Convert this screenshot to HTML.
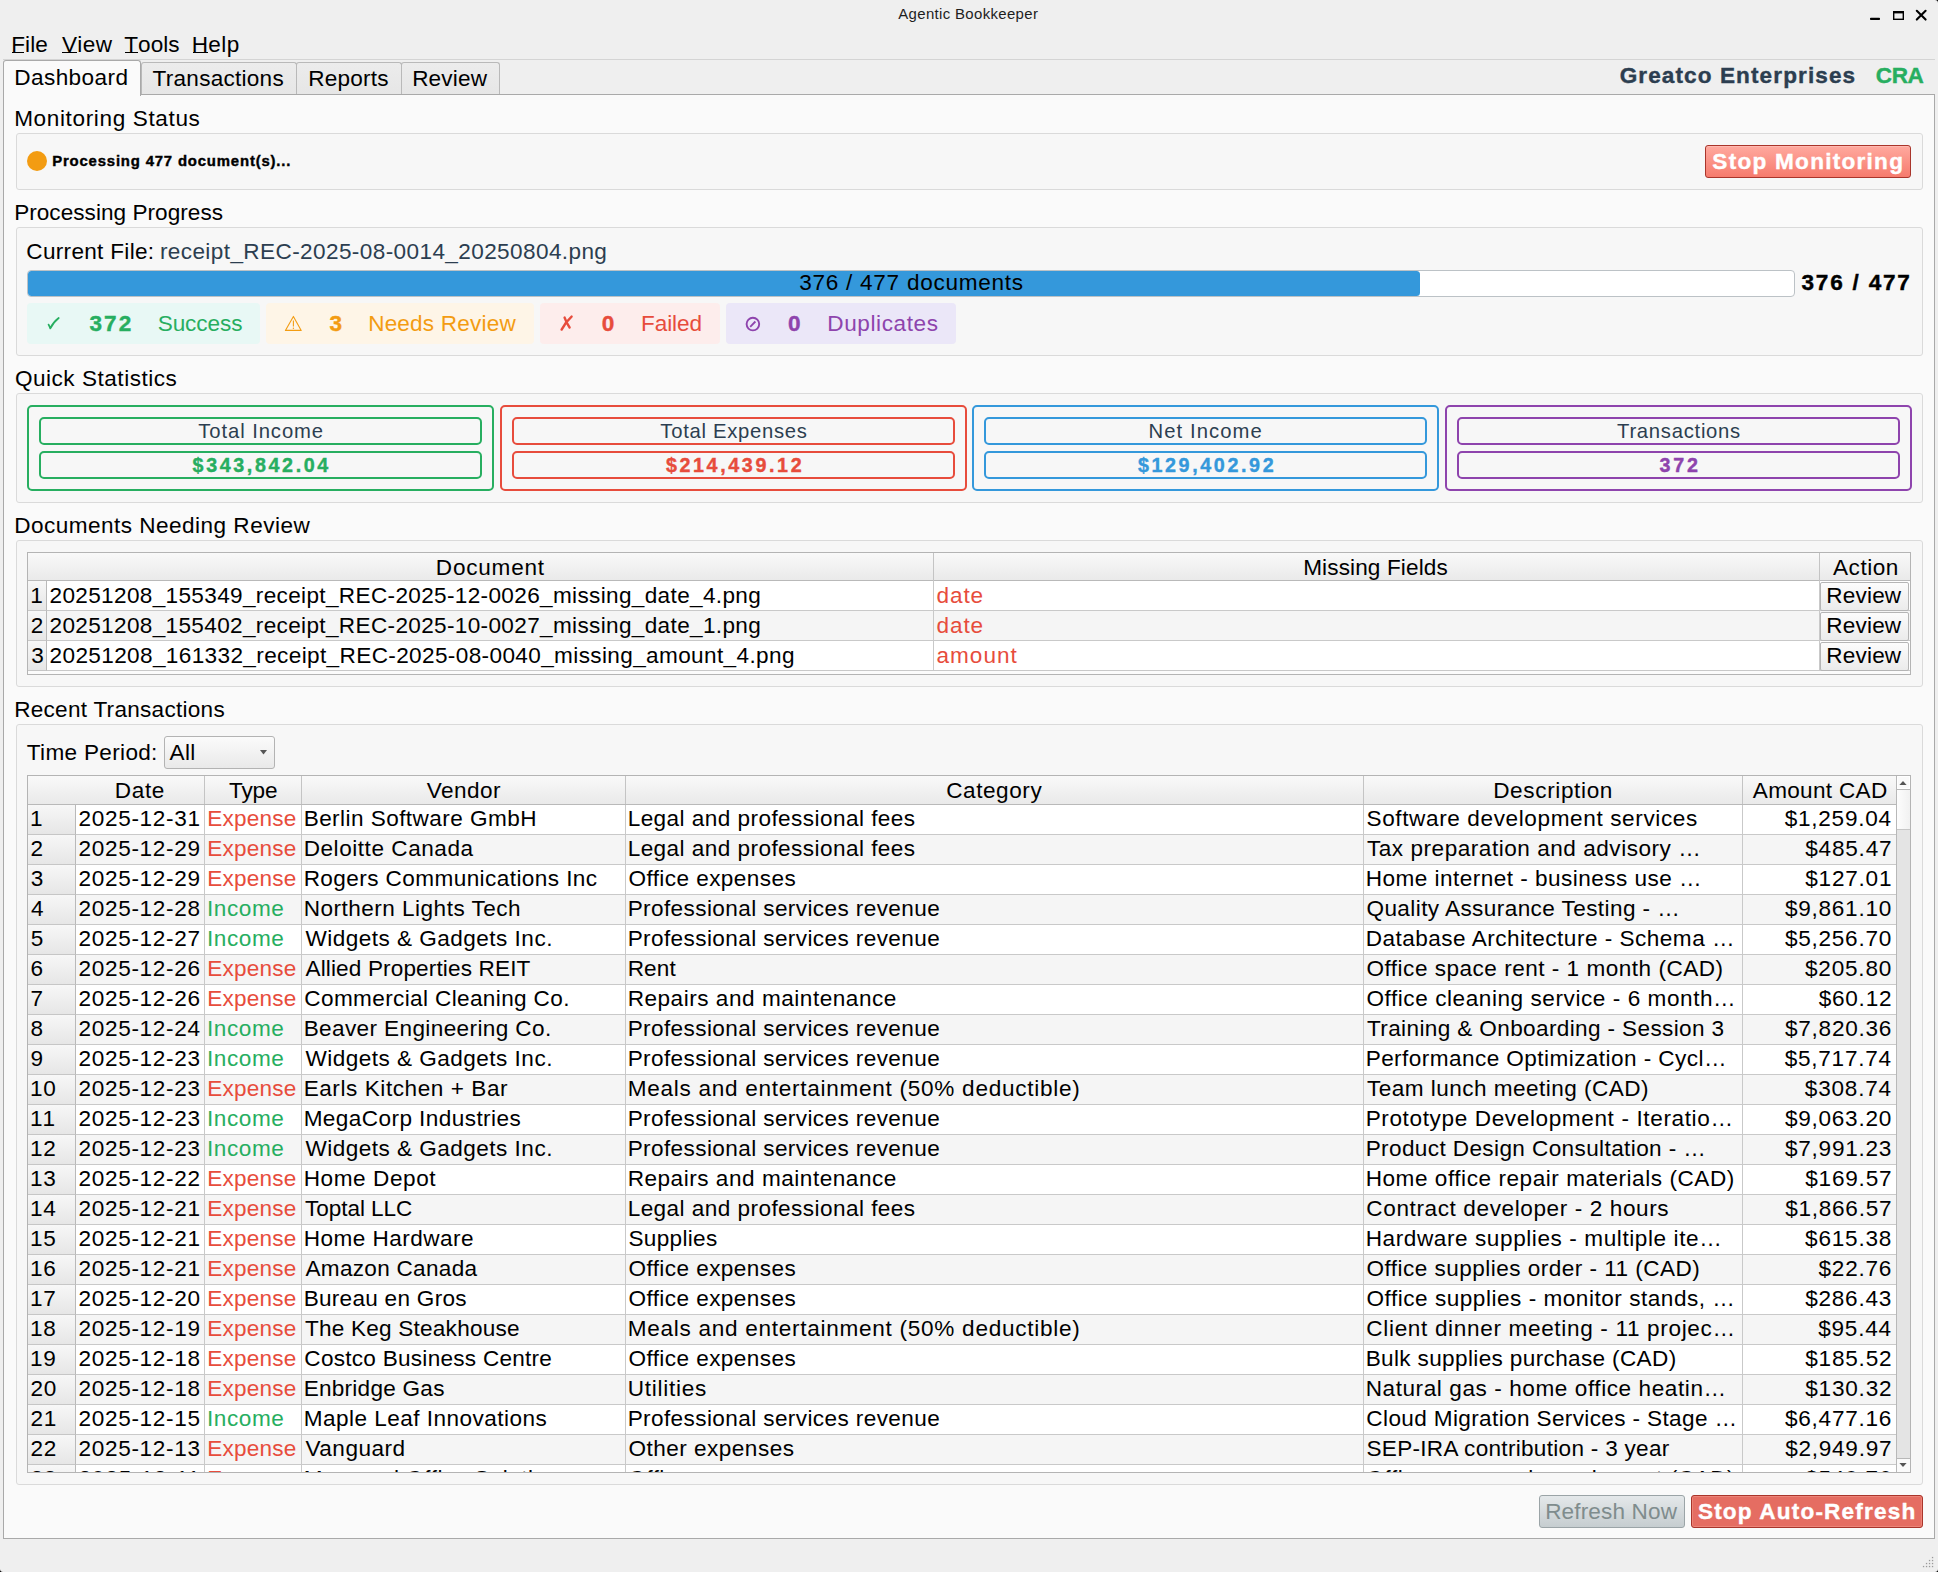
<!DOCTYPE html>
<html><head><meta charset="utf-8"><title>Agentic Bookkeeper</title>
<style>
*{margin:0;padding:0;box-sizing:border-box}
html,body{width:1938px;height:1572px;overflow:hidden}
body{background:#efefef;position:relative;font-family:"Liberation Sans",sans-serif;font-kerning:normal}
.b{position:absolute}
.t{position:absolute;white-space:pre;line-height:1}
</style></head><body>
<div class="t" style="left:898.32px;top:7px;font-size:14.95px;letter-spacing:0.345px;color:#1e1e1e;">Agentic Bookkeeper</div>
<svg class="b" style="left:1860px;top:0px" width="78" height="30" viewBox="1860 0 78 30"><rect x="1870" y="17.8" width="10" height="2.2" rx="0.8" fill="#000"/><rect x="1893.7" y="11.7" width="9.6" height="7.6" fill="none" stroke="#000" stroke-width="1.4"/><rect x="1893" y="11" width="11" height="2.4" fill="#000"/><path d="M1916.8 10.8L1925.6 19.6M1925.6 10.8L1916.8 19.6" stroke="#000" stroke-width="2.1" stroke-linecap="round"/></svg>
<div class="t" style="left:11.15px;top:34px;font-size:22.57px;letter-spacing:0.099px;color:#000;font-kerning:none;">File</div>
<div class="b" style="left:12px;top:52px;width:12px;height:1.3px;background:#000"></div>
<div class="t" style="left:61.90px;top:34px;font-size:22.57px;letter-spacing:0.377px;color:#000;font-kerning:none;">View</div>
<div class="b" style="left:62px;top:52px;width:15px;height:1.3px;background:#000"></div>
<div class="t" style="left:124.29px;top:34px;font-size:22.57px;letter-spacing:0.049px;color:#000;font-kerning:none;">Tools</div>
<div class="b" style="left:124.9px;top:52px;width:13.099999999999994px;height:1.3px;background:#000"></div>
<div class="t" style="left:191.65px;top:34px;font-size:22.57px;letter-spacing:0.397px;color:#000;font-kerning:none;">Help</div>
<div class="b" style="left:193px;top:52px;width:15px;height:1.3px;background:#000"></div>
<div class="b" style="left:3px;top:59px;width:1932px;height:1px;background:#d4d4d4"></div>
<div class="b" style="left:3px;top:94px;width:1932px;height:1445px;background:#fafafa;border:1px solid #a9a9a9"></div>
<div class="b" style="left:141px;top:62px;width:156px;height:32px;background:linear-gradient(#ececec,#e6e6e6);border:1px solid #b9b9b9;border-bottom:none;border-radius:3px 3px 0 0"></div>
<div class="b" style="left:296px;top:62px;width:106px;height:32px;background:linear-gradient(#ececec,#e6e6e6);border:1px solid #b9b9b9;border-bottom:none;border-radius:3px 3px 0 0"></div>
<div class="b" style="left:401px;top:62px;width:99px;height:32px;background:linear-gradient(#ececec,#e6e6e6);border:1px solid #b9b9b9;border-bottom:none;border-radius:3px 3px 0 0"></div>
<div class="b" style="left:3px;top:60px;width:138px;height:36px;background:#fafafa;border:1px solid #a9a9a9;border-bottom:none;border-radius:3px 3px 0 0"></div>
<div class="t" style="left:14.25px;top:67px;font-size:22.57px;letter-spacing:0.424px;color:#000;">Dashboard</div>
<div class="t" style="left:152.59px;top:68px;font-size:22.57px;letter-spacing:0.254px;color:#000;">Transactions</div>
<div class="t" style="left:308.15px;top:68px;font-size:22.57px;letter-spacing:0.248px;color:#000;">Reports</div>
<div class="t" style="left:412.15px;top:68px;font-size:22.57px;letter-spacing:0.187px;color:#000;">Review</div>
<div class="t" style="left:1619.67px;top:65px;font-size:22.57px;letter-spacing:1.097px;color:#2c3e50;font-weight:bold;-webkit-text-stroke:0.4px #2c3e50;">Greatco Enterprises</div>
<div class="t" style="left:1875.67px;top:65px;font-size:22.57px;letter-spacing:-0.314px;color:#27ae60;font-weight:bold;-webkit-text-stroke:0.4px #27ae60;">CRA</div>
<div class="t" style="left:14.15px;top:108px;font-size:22.57px;letter-spacing:0.633px;color:#000;">Monitoring Status</div>
<div class="b" style="left:16px;top:133px;width:1907px;height:57px;background:#f7f7f7;border:1px solid #dadada;border-radius:3px"></div>
<div class="t" style="left:14.15px;top:202px;font-size:22.57px;letter-spacing:0.040px;color:#000;">Processing Progress</div>
<div class="b" style="left:16px;top:227px;width:1907px;height:129px;background:#f7f7f7;border:1px solid #dadada;border-radius:3px"></div>
<div class="t" style="left:14.93px;top:368px;font-size:22.57px;letter-spacing:0.513px;color:#000;">Quick Statistics</div>
<div class="b" style="left:16px;top:393px;width:1907px;height:110px;background:#f7f7f7;border:1px solid #dadada;border-radius:3px"></div>
<div class="t" style="left:14.15px;top:515px;font-size:22.57px;letter-spacing:0.474px;color:#000;">Documents Needing Review</div>
<div class="b" style="left:16px;top:540px;width:1907px;height:147px;background:#f7f7f7;border:1px solid #dadada;border-radius:3px"></div>
<div class="t" style="left:14.15px;top:699px;font-size:22.57px;letter-spacing:0.270px;color:#000;">Recent Transactions</div>
<div class="b" style="left:16px;top:724px;width:1907px;height:761px;background:#f7f7f7;border:1px solid #dadada;border-radius:3px"></div>
<div class="b" style="left:27px;top:151px;width:20px;height:20px;background:#f39c12;border-radius:50%"></div>
<div class="t" style="left:52.20px;top:154px;font-size:14.9px;letter-spacing:0.823px;color:#000;font-weight:bold;-webkit-text-stroke:0.4px #000;">Processing 477 document(s)...</div>
<div class="b" style="left:1705px;top:145px;width:206px;height:33px;background:linear-gradient(#ffa99f,#f67b6d);border:1px solid #a9352b;border-radius:3px;box-shadow:inset 0 1px 0 #ffb9b0"></div>
<div class="t" style="left:1712.35px;top:151px;font-size:22.57px;letter-spacing:1.262px;color:#fff;font-weight:bold;-webkit-text-stroke:0.4px #fff;">Stop Monitoring</div>
<div class="t" style="left:26.35px;top:241px;font-size:22.57px;letter-spacing:0.302px;color:#000;">Current File:</div>
<div class="t" style="left:159.90px;top:241px;font-size:22.57px;letter-spacing:0.396px;color:#2c3e50;">receipt_REC-2025-08-0014_20250804.png</div>
<div class="b" style="left:27px;top:270px;width:1768px;height:27px;background:#fff;border:1px solid #bcc2c6;border-radius:4px"></div>
<div class="b" style="left:28px;top:271px;width:1392px;height:25px;background:#3498db;border-radius:3.5px"></div>
<div class="t" style="left:799.20px;top:272px;font-size:22.57px;letter-spacing:0.735px;color:#000;">376 / 477 documents</div>
<div class="t" style="left:1801.48px;top:272px;font-size:22.57px;letter-spacing:1.790px;color:#000;font-weight:bold;-webkit-text-stroke:0.4px #000;">376 / 477</div>
<div class="b" style="left:27px;top:303px;width:233px;height:41px;background:#e8f8f5;border-radius:4px"></div>
<div class="b" style="left:266px;top:303px;width:268px;height:41px;background:#fef5e7;border-radius:4px"></div>
<div class="b" style="left:540px;top:303px;width:180px;height:41px;background:#fdedec;border-radius:4px"></div>
<div class="b" style="left:726px;top:303px;width:230px;height:41px;background:#ebe7f8;border-radius:4px"></div>
<div class="t" style="left:89.38px;top:313px;font-size:22.57px;letter-spacing:2.094px;color:#27ae60;font-weight:bold;-webkit-text-stroke:0.4px #27ae60;">372</div>
<div class="t" style="left:157.68px;top:313px;font-size:22.57px;letter-spacing:-0.078px;color:#27ae60;">Success</div>
<div class="t" style="left:329.48px;top:313px;font-size:22.57px;letter-spacing:2.084px;color:#f39c12;font-weight:bold;-webkit-text-stroke:0.4px #f39c12;">3</div>
<div class="t" style="left:368.15px;top:313px;font-size:22.57px;letter-spacing:0.193px;color:#f39c12;">Needs Review</div>
<div class="t" style="left:601.71px;top:313px;font-size:22.57px;letter-spacing:2.084px;color:#e74c3c;font-weight:bold;-webkit-text-stroke:0.4px #e74c3c;">0</div>
<div class="t" style="left:640.95px;top:313px;font-size:22.57px;letter-spacing:-0.061px;color:#e74c3c;">Failed</div>
<div class="t" style="left:787.91px;top:313px;font-size:22.57px;letter-spacing:2.084px;color:#8e44ad;font-weight:bold;-webkit-text-stroke:0.4px #8e44ad;">0</div>
<div class="t" style="left:827.35px;top:313px;font-size:22.57px;letter-spacing:0.591px;color:#8e44ad;">Duplicates</div>
<svg class="b" style="left:0;top:300px" width="980" height="50" viewBox="0 300 980 50"><path d="M48.6 324.6Q49.6 326.5 50.3 328.3Q53 322.5 58.7 318" fill="none" stroke="#27ae60" stroke-width="1.8" stroke-linecap="round" stroke-linejoin="round"/><path d="M293.4 316.4L285.4 330.4L301.2 330.4Z" fill="none" stroke="#f39c12" stroke-width="1.1" stroke-linejoin="round"/><path d="M293.4 320.5L293.4 326.6" stroke="#f39c12" stroke-width="1.1"/><circle cx="293.4" cy="328.3" r="0.7" fill="#f39c12"/><path d="M564.6 317.6Q566.5 323 569.6 327.5M571.6 316.6Q565.5 322 561.6 329.6" fill="none" stroke="#e74c3c" stroke-width="2.4" stroke-linecap="round"/><circle cx="752.9" cy="324.1" r="6.3" fill="none" stroke="#8e44ad" stroke-width="1.9"/><path d="M750.2 326.8L755.4 321.5" stroke="#8e44ad" stroke-width="1.8"/></svg>
<div class="b" style="left:27px;top:405px;width:467px;height:86px;border:2px solid #27ae60;border-radius:5px"></div>
<div class="b" style="left:39px;top:417px;width:443px;height:28px;border:2px solid #27ae60;border-radius:5px"></div>
<div class="b" style="left:39px;top:451px;width:443px;height:28px;border:2px solid #27ae60;border-radius:5px"></div>
<div class="t" style="left:198.32px;top:421px;font-size:20.25px;letter-spacing:0.908px;color:#2c3e50;">Total Income</div>
<div class="t" style="left:192.57px;top:456px;font-size:19.7px;letter-spacing:2.622px;color:#27ae60;font-weight:bold;-webkit-text-stroke:0.4px #27ae60;">$343,842.04</div>
<div class="b" style="left:500px;top:405px;width:467px;height:86px;border:2px solid #e74c3c;border-radius:5px"></div>
<div class="b" style="left:512px;top:417px;width:443px;height:28px;border:2px solid #e74c3c;border-radius:5px"></div>
<div class="b" style="left:512px;top:451px;width:443px;height:28px;border:2px solid #e74c3c;border-radius:5px"></div>
<div class="t" style="left:660.37px;top:421px;font-size:20.25px;letter-spacing:0.708px;color:#2c3e50;">Total Expenses</div>
<div class="t" style="left:665.91px;top:456px;font-size:19.7px;letter-spacing:2.622px;color:#e74c3c;font-weight:bold;-webkit-text-stroke:0.4px #e74c3c;">$214,439.12</div>
<div class="b" style="left:972px;top:405px;width:467px;height:86px;border:2px solid #3498db;border-radius:5px"></div>
<div class="b" style="left:984px;top:417px;width:443px;height:28px;border:2px solid #3498db;border-radius:5px"></div>
<div class="b" style="left:984px;top:451px;width:443px;height:28px;border:2px solid #3498db;border-radius:5px"></div>
<div class="t" style="left:1148.55px;top:421px;font-size:20.25px;letter-spacing:1.065px;color:#2c3e50;">Net Income</div>
<div class="t" style="left:1137.91px;top:456px;font-size:19.7px;letter-spacing:2.622px;color:#3498db;font-weight:bold;-webkit-text-stroke:0.4px #3498db;">$129,402.92</div>
<div class="b" style="left:1445px;top:405px;width:467px;height:86px;border:2px solid #8e44ad;border-radius:5px"></div>
<div class="b" style="left:1457px;top:417px;width:443px;height:28px;border:2px solid #8e44ad;border-radius:5px"></div>
<div class="b" style="left:1457px;top:451px;width:443px;height:28px;border:2px solid #8e44ad;border-radius:5px"></div>
<div class="t" style="left:1617.06px;top:421px;font-size:20.25px;letter-spacing:0.727px;color:#2c3e50;">Transactions</div>
<div class="t" style="left:1659.48px;top:456px;font-size:19.7px;letter-spacing:2.754px;color:#8e44ad;font-weight:bold;-webkit-text-stroke:0.4px #8e44ad;">372</div>
<div class="b" style="left:27px;top:552px;width:1884px;height:123px;background:#fbfbfb;border:1px solid #b4b4b4"></div>
<div class="b" style="left:28px;top:553px;width:1882px;height:28px;background:linear-gradient(#f9f9f9,#e9e9e9)"></div>
<div class="b" style="left:28px;top:580px;width:1882px;height:1px;background:#b9b9b9"></div>
<div class="b" style="left:933px;top:553px;width:1px;height:28px;background:#c4c4c4"></div>
<div class="b" style="left:1819px;top:553px;width:1px;height:28px;background:#c4c4c4"></div>
<div class="t" style="left:435.82px;top:557px;font-size:22.57px;letter-spacing:0.776px;color:#000;">Document</div>
<div class="t" style="left:1303.18px;top:557px;font-size:22.57px;letter-spacing:0.128px;color:#000;">Missing Fields</div>
<div class="t" style="left:1833.02px;top:557px;font-size:22.57px;letter-spacing:0.535px;color:#000;">Action</div>
<div class="b" style="left:47px;top:581px;width:1863px;height:30px;background:#ffffff"></div>
<div class="b" style="left:28px;top:581px;width:19px;height:30px;background:linear-gradient(#f7f7f7,#e6e6e6);border-right:1px solid #b9b9b9;border-bottom:1px solid #c6c6c6"></div>
<div class="b" style="left:47px;top:610px;width:1863px;height:1px;background:#c9c9c9"></div>
<div class="b" style="left:933px;top:581px;width:1px;height:30px;background:#c9c9c9"></div>
<div class="b" style="left:1819px;top:581px;width:1px;height:30px;background:#c9c9c9"></div>
<div class="t" style="left:30.28px;top:585px;font-size:22.57px;letter-spacing:0.831px;color:#000;">1</div>
<div class="t" style="left:49.56px;top:585px;font-size:22.57px;letter-spacing:0.345px;color:#000;">20251208_155349_receipt_REC-2025-12-0026_missing_date_4.png</div>
<div class="t" style="left:936.55px;top:585px;font-size:22.57px;letter-spacing:0.886px;color:#e74c3c;">date</div>
<div class="b" style="left:1820px;top:582px;width:89px;height:29px;background:linear-gradient(#fcfcfc,#ebebeb);border:1px solid #b5b5b5;border-radius:2px"></div>
<div class="t" style="left:1826.25px;top:585px;font-size:22.57px;letter-spacing:0.187px;color:#000;">Review</div>
<div class="b" style="left:47px;top:611px;width:1863px;height:30px;background:#f5f5f5"></div>
<div class="b" style="left:28px;top:611px;width:19px;height:30px;background:linear-gradient(#f7f7f7,#e6e6e6);border-right:1px solid #b9b9b9;border-bottom:1px solid #c6c6c6"></div>
<div class="b" style="left:47px;top:640px;width:1863px;height:1px;background:#c9c9c9"></div>
<div class="b" style="left:933px;top:611px;width:1px;height:30px;background:#c9c9c9"></div>
<div class="b" style="left:1819px;top:611px;width:1px;height:30px;background:#c9c9c9"></div>
<div class="t" style="left:30.86px;top:615px;font-size:22.57px;letter-spacing:0.831px;color:#000;">2</div>
<div class="t" style="left:49.56px;top:615px;font-size:22.57px;letter-spacing:0.345px;color:#000;">20251208_155402_receipt_REC-2025-10-0027_missing_date_1.png</div>
<div class="t" style="left:936.55px;top:615px;font-size:22.57px;letter-spacing:0.886px;color:#e74c3c;">date</div>
<div class="b" style="left:1820px;top:612px;width:89px;height:29px;background:linear-gradient(#fcfcfc,#ebebeb);border:1px solid #b5b5b5;border-radius:2px"></div>
<div class="t" style="left:1826.25px;top:615px;font-size:22.57px;letter-spacing:0.187px;color:#000;">Review</div>
<div class="b" style="left:47px;top:641px;width:1863px;height:30px;background:#ffffff"></div>
<div class="b" style="left:28px;top:641px;width:19px;height:30px;background:linear-gradient(#f7f7f7,#e6e6e6);border-right:1px solid #b9b9b9;border-bottom:1px solid #c6c6c6"></div>
<div class="b" style="left:47px;top:670px;width:1863px;height:1px;background:#c9c9c9"></div>
<div class="b" style="left:933px;top:641px;width:1px;height:30px;background:#c9c9c9"></div>
<div class="b" style="left:1819px;top:641px;width:1px;height:30px;background:#c9c9c9"></div>
<div class="t" style="left:31.14px;top:645px;font-size:22.57px;letter-spacing:0.831px;color:#000;">3</div>
<div class="t" style="left:49.56px;top:645px;font-size:22.57px;letter-spacing:0.373px;color:#000;">20251208_161332_receipt_REC-2025-08-0040_missing_amount_4.png</div>
<div class="t" style="left:936.54px;top:645px;font-size:22.57px;letter-spacing:0.992px;color:#e74c3c;">amount</div>
<div class="b" style="left:1820px;top:642px;width:89px;height:29px;background:linear-gradient(#fcfcfc,#ebebeb);border:1px solid #b5b5b5;border-radius:2px"></div>
<div class="t" style="left:1826.25px;top:645px;font-size:22.57px;letter-spacing:0.187px;color:#000;">Review</div>
<div class="t" style="left:26.79px;top:742px;font-size:22.57px;letter-spacing:0.323px;color:#000;">Time Period:</div>
<div class="b" style="left:164px;top:736px;width:111px;height:33px;background:linear-gradient(#fbfbfb,#e9e9e9);border:1px solid #b3b3b3;border-radius:3px"></div>
<div class="t" style="left:169.56px;top:742px;font-size:22.57px;letter-spacing:0.339px;color:#000;">All</div>
<svg class="b" style="left:255px;top:745px" width="16" height="14" viewBox="255 745 16 14"><path d="M260 750L267 750L263.5 754.6Z" fill="#555"/></svg>
<div class="b" style="left:27px;top:775px;width:1884px;height:698px;background:#fff;border:1px solid #b4b4b4"></div>
<div class="b" style="left:28px;top:805px;width:1868px;height:667px;overflow:hidden">
<div class="b" style="left:48px;top:0px;width:1820px;height:30px;background:#ffffff"></div>
<div class="b" style="left:0px;top:0px;width:48px;height:30px;background:linear-gradient(#f7f7f7,#e6e6e6);border-right:1px solid #b9b9b9;border-bottom:1px solid #c6c6c6"></div>
<div class="b" style="left:48px;top:29px;width:1820px;height:1px;background:#c9c9c9"></div>
<div class="b" style="left:48px;top:30px;width:1820px;height:30px;background:#f5f5f5"></div>
<div class="b" style="left:0px;top:30px;width:48px;height:30px;background:linear-gradient(#f7f7f7,#e6e6e6);border-right:1px solid #b9b9b9;border-bottom:1px solid #c6c6c6"></div>
<div class="b" style="left:48px;top:59px;width:1820px;height:1px;background:#c9c9c9"></div>
<div class="b" style="left:48px;top:60px;width:1820px;height:30px;background:#ffffff"></div>
<div class="b" style="left:0px;top:60px;width:48px;height:30px;background:linear-gradient(#f7f7f7,#e6e6e6);border-right:1px solid #b9b9b9;border-bottom:1px solid #c6c6c6"></div>
<div class="b" style="left:48px;top:89px;width:1820px;height:1px;background:#c9c9c9"></div>
<div class="b" style="left:48px;top:90px;width:1820px;height:30px;background:#f5f5f5"></div>
<div class="b" style="left:0px;top:90px;width:48px;height:30px;background:linear-gradient(#f7f7f7,#e6e6e6);border-right:1px solid #b9b9b9;border-bottom:1px solid #c6c6c6"></div>
<div class="b" style="left:48px;top:119px;width:1820px;height:1px;background:#c9c9c9"></div>
<div class="b" style="left:48px;top:120px;width:1820px;height:30px;background:#ffffff"></div>
<div class="b" style="left:0px;top:120px;width:48px;height:30px;background:linear-gradient(#f7f7f7,#e6e6e6);border-right:1px solid #b9b9b9;border-bottom:1px solid #c6c6c6"></div>
<div class="b" style="left:48px;top:149px;width:1820px;height:1px;background:#c9c9c9"></div>
<div class="b" style="left:48px;top:150px;width:1820px;height:30px;background:#f5f5f5"></div>
<div class="b" style="left:0px;top:150px;width:48px;height:30px;background:linear-gradient(#f7f7f7,#e6e6e6);border-right:1px solid #b9b9b9;border-bottom:1px solid #c6c6c6"></div>
<div class="b" style="left:48px;top:179px;width:1820px;height:1px;background:#c9c9c9"></div>
<div class="b" style="left:48px;top:180px;width:1820px;height:30px;background:#ffffff"></div>
<div class="b" style="left:0px;top:180px;width:48px;height:30px;background:linear-gradient(#f7f7f7,#e6e6e6);border-right:1px solid #b9b9b9;border-bottom:1px solid #c6c6c6"></div>
<div class="b" style="left:48px;top:209px;width:1820px;height:1px;background:#c9c9c9"></div>
<div class="b" style="left:48px;top:210px;width:1820px;height:30px;background:#f5f5f5"></div>
<div class="b" style="left:0px;top:210px;width:48px;height:30px;background:linear-gradient(#f7f7f7,#e6e6e6);border-right:1px solid #b9b9b9;border-bottom:1px solid #c6c6c6"></div>
<div class="b" style="left:48px;top:239px;width:1820px;height:1px;background:#c9c9c9"></div>
<div class="b" style="left:48px;top:240px;width:1820px;height:30px;background:#ffffff"></div>
<div class="b" style="left:0px;top:240px;width:48px;height:30px;background:linear-gradient(#f7f7f7,#e6e6e6);border-right:1px solid #b9b9b9;border-bottom:1px solid #c6c6c6"></div>
<div class="b" style="left:48px;top:269px;width:1820px;height:1px;background:#c9c9c9"></div>
<div class="b" style="left:48px;top:270px;width:1820px;height:30px;background:#f5f5f5"></div>
<div class="b" style="left:0px;top:270px;width:48px;height:30px;background:linear-gradient(#f7f7f7,#e6e6e6);border-right:1px solid #b9b9b9;border-bottom:1px solid #c6c6c6"></div>
<div class="b" style="left:48px;top:299px;width:1820px;height:1px;background:#c9c9c9"></div>
<div class="b" style="left:48px;top:300px;width:1820px;height:30px;background:#ffffff"></div>
<div class="b" style="left:0px;top:300px;width:48px;height:30px;background:linear-gradient(#f7f7f7,#e6e6e6);border-right:1px solid #b9b9b9;border-bottom:1px solid #c6c6c6"></div>
<div class="b" style="left:48px;top:329px;width:1820px;height:1px;background:#c9c9c9"></div>
<div class="b" style="left:48px;top:330px;width:1820px;height:30px;background:#f5f5f5"></div>
<div class="b" style="left:0px;top:330px;width:48px;height:30px;background:linear-gradient(#f7f7f7,#e6e6e6);border-right:1px solid #b9b9b9;border-bottom:1px solid #c6c6c6"></div>
<div class="b" style="left:48px;top:359px;width:1820px;height:1px;background:#c9c9c9"></div>
<div class="b" style="left:48px;top:360px;width:1820px;height:30px;background:#ffffff"></div>
<div class="b" style="left:0px;top:360px;width:48px;height:30px;background:linear-gradient(#f7f7f7,#e6e6e6);border-right:1px solid #b9b9b9;border-bottom:1px solid #c6c6c6"></div>
<div class="b" style="left:48px;top:389px;width:1820px;height:1px;background:#c9c9c9"></div>
<div class="b" style="left:48px;top:390px;width:1820px;height:30px;background:#f5f5f5"></div>
<div class="b" style="left:0px;top:390px;width:48px;height:30px;background:linear-gradient(#f7f7f7,#e6e6e6);border-right:1px solid #b9b9b9;border-bottom:1px solid #c6c6c6"></div>
<div class="b" style="left:48px;top:419px;width:1820px;height:1px;background:#c9c9c9"></div>
<div class="b" style="left:48px;top:420px;width:1820px;height:30px;background:#ffffff"></div>
<div class="b" style="left:0px;top:420px;width:48px;height:30px;background:linear-gradient(#f7f7f7,#e6e6e6);border-right:1px solid #b9b9b9;border-bottom:1px solid #c6c6c6"></div>
<div class="b" style="left:48px;top:449px;width:1820px;height:1px;background:#c9c9c9"></div>
<div class="b" style="left:48px;top:450px;width:1820px;height:30px;background:#f5f5f5"></div>
<div class="b" style="left:0px;top:450px;width:48px;height:30px;background:linear-gradient(#f7f7f7,#e6e6e6);border-right:1px solid #b9b9b9;border-bottom:1px solid #c6c6c6"></div>
<div class="b" style="left:48px;top:479px;width:1820px;height:1px;background:#c9c9c9"></div>
<div class="b" style="left:48px;top:480px;width:1820px;height:30px;background:#ffffff"></div>
<div class="b" style="left:0px;top:480px;width:48px;height:30px;background:linear-gradient(#f7f7f7,#e6e6e6);border-right:1px solid #b9b9b9;border-bottom:1px solid #c6c6c6"></div>
<div class="b" style="left:48px;top:509px;width:1820px;height:1px;background:#c9c9c9"></div>
<div class="b" style="left:48px;top:510px;width:1820px;height:30px;background:#f5f5f5"></div>
<div class="b" style="left:0px;top:510px;width:48px;height:30px;background:linear-gradient(#f7f7f7,#e6e6e6);border-right:1px solid #b9b9b9;border-bottom:1px solid #c6c6c6"></div>
<div class="b" style="left:48px;top:539px;width:1820px;height:1px;background:#c9c9c9"></div>
<div class="b" style="left:48px;top:540px;width:1820px;height:30px;background:#ffffff"></div>
<div class="b" style="left:0px;top:540px;width:48px;height:30px;background:linear-gradient(#f7f7f7,#e6e6e6);border-right:1px solid #b9b9b9;border-bottom:1px solid #c6c6c6"></div>
<div class="b" style="left:48px;top:569px;width:1820px;height:1px;background:#c9c9c9"></div>
<div class="b" style="left:48px;top:570px;width:1820px;height:30px;background:#f5f5f5"></div>
<div class="b" style="left:0px;top:570px;width:48px;height:30px;background:linear-gradient(#f7f7f7,#e6e6e6);border-right:1px solid #b9b9b9;border-bottom:1px solid #c6c6c6"></div>
<div class="b" style="left:48px;top:599px;width:1820px;height:1px;background:#c9c9c9"></div>
<div class="b" style="left:48px;top:600px;width:1820px;height:30px;background:#ffffff"></div>
<div class="b" style="left:0px;top:600px;width:48px;height:30px;background:linear-gradient(#f7f7f7,#e6e6e6);border-right:1px solid #b9b9b9;border-bottom:1px solid #c6c6c6"></div>
<div class="b" style="left:48px;top:629px;width:1820px;height:1px;background:#c9c9c9"></div>
<div class="b" style="left:48px;top:630px;width:1820px;height:30px;background:#f5f5f5"></div>
<div class="b" style="left:0px;top:630px;width:48px;height:30px;background:linear-gradient(#f7f7f7,#e6e6e6);border-right:1px solid #b9b9b9;border-bottom:1px solid #c6c6c6"></div>
<div class="b" style="left:48px;top:659px;width:1820px;height:1px;background:#c9c9c9"></div>
<div class="b" style="left:48px;top:660px;width:1820px;height:30px;background:#ffffff"></div>
<div class="b" style="left:0px;top:660px;width:48px;height:30px;background:linear-gradient(#f7f7f7,#e6e6e6);border-right:1px solid #b9b9b9;border-bottom:1px solid #c6c6c6"></div>
<div class="b" style="left:48px;top:689px;width:1820px;height:1px;background:#c9c9c9"></div>
</div>
<div class="b" style="left:204px;top:805px;width:1px;height:667px;background:#c9c9c9"></div>
<div class="b" style="left:301px;top:805px;width:1px;height:667px;background:#c9c9c9"></div>
<div class="b" style="left:625px;top:805px;width:1px;height:667px;background:#c9c9c9"></div>
<div class="b" style="left:1363px;top:805px;width:1px;height:667px;background:#c9c9c9"></div>
<div class="b" style="left:1742px;top:805px;width:1px;height:667px;background:#c9c9c9"></div>
<div class="b" style="left:1896px;top:805px;width:1px;height:667px;background:#c6c6c6"></div>
<div class="b" style="left:28px;top:776px;width:1868px;height:29px;background:linear-gradient(#f9f9f9,#e9e9e9)"></div>
<div class="b" style="left:28px;top:804px;width:1868px;height:1px;background:#b9b9b9"></div>
<div class="b" style="left:204px;top:776px;width:1px;height:28px;background:#c4c4c4"></div>
<div class="b" style="left:301px;top:776px;width:1px;height:28px;background:#c4c4c4"></div>
<div class="b" style="left:625px;top:776px;width:1px;height:28px;background:#c4c4c4"></div>
<div class="b" style="left:1363px;top:776px;width:1px;height:28px;background:#c4c4c4"></div>
<div class="b" style="left:1742px;top:776px;width:1px;height:28px;background:#c4c4c4"></div>
<div class="t" style="left:114.75px;top:780px;font-size:22.57px;letter-spacing:0.660px;color:#000;">Date</div>
<div class="t" style="left:229.00px;top:780px;font-size:22.57px;letter-spacing:-0.142px;color:#000;">Type</div>
<div class="t" style="left:426.86px;top:780px;font-size:22.57px;letter-spacing:0.406px;color:#000;">Vendor</div>
<div class="t" style="left:946.16px;top:780px;font-size:22.57px;letter-spacing:0.575px;color:#000;">Category</div>
<div class="t" style="left:1493.18px;top:780px;font-size:22.57px;letter-spacing:0.639px;color:#000;">Description</div>
<div class="t" style="left:1752.81px;top:780px;font-size:22.57px;letter-spacing:0.304px;color:#000;">Amount CAD</div>
<div class="b" style="left:0;top:805px;width:1896px;height:667px;overflow:hidden">
<div class="t" style="left:29.88px;top:3px;font-size:22.57px;letter-spacing:0.831px;color:#000;">1</div>
<div class="t" style="left:78.46px;top:3px;font-size:22.57px;letter-spacing:0.691px;color:#000;">2025-12-31</div>
<div class="t" style="left:207.25px;top:3px;font-size:22.57px;letter-spacing:0.217px;color:#e74c3c;">Expense</div>
<div class="t" style="left:303.65px;top:3px;font-size:22.57px;letter-spacing:0.441px;color:#000;">Berlin Software GmbH</div>
<div class="t" style="left:627.65px;top:3px;font-size:22.57px;letter-spacing:0.443px;color:#000;">Legal and professional fees</div>
<div class="t" style="left:1366.48px;top:3px;font-size:22.57px;letter-spacing:0.617px;color:#000;">Software development services</div>
<div class="t" style="left:1784.68px;top:3px;font-size:22.57px;letter-spacing:0.751px;color:#000;">$1,259.04</div>
<div class="t" style="left:30.46px;top:33px;font-size:22.57px;letter-spacing:0.831px;color:#000;">2</div>
<div class="t" style="left:78.46px;top:33px;font-size:22.57px;letter-spacing:0.691px;color:#000;">2025-12-29</div>
<div class="t" style="left:207.25px;top:33px;font-size:22.57px;letter-spacing:0.217px;color:#e74c3c;">Expense</div>
<div class="t" style="left:303.65px;top:33px;font-size:22.57px;letter-spacing:0.545px;color:#000;">Deloitte Canada</div>
<div class="t" style="left:627.65px;top:33px;font-size:22.57px;letter-spacing:0.443px;color:#000;">Legal and professional fees</div>
<div class="t" style="left:1366.99px;top:33px;font-size:22.57px;letter-spacing:0.525px;color:#000;">Tax preparation and advisory …</div>
<div class="t" style="left:1805.27px;top:33px;font-size:22.57px;letter-spacing:0.784px;color:#000;">$485.47</div>
<div class="t" style="left:30.74px;top:63px;font-size:22.57px;letter-spacing:0.831px;color:#000;">3</div>
<div class="t" style="left:78.46px;top:63px;font-size:22.57px;letter-spacing:0.691px;color:#000;">2025-12-29</div>
<div class="t" style="left:207.25px;top:63px;font-size:22.57px;letter-spacing:0.217px;color:#e74c3c;">Expense</div>
<div class="t" style="left:303.65px;top:63px;font-size:22.57px;letter-spacing:0.419px;color:#000;">Rogers Communications Inc</div>
<div class="t" style="left:628.43px;top:63px;font-size:22.57px;letter-spacing:0.423px;color:#000;">Office expenses</div>
<div class="t" style="left:1365.65px;top:63px;font-size:22.57px;letter-spacing:0.473px;color:#000;">Home internet - business use …</div>
<div class="t" style="left:1805.24px;top:63px;font-size:22.57px;letter-spacing:0.784px;color:#000;">$127.01</div>
<div class="t" style="left:31.08px;top:93px;font-size:22.57px;letter-spacing:0.831px;color:#000;">4</div>
<div class="t" style="left:78.46px;top:93px;font-size:22.57px;letter-spacing:0.691px;color:#000;">2025-12-28</div>
<div class="t" style="left:207.02px;top:93px;font-size:22.57px;letter-spacing:0.577px;color:#27ae60;">Income</div>
<div class="t" style="left:303.65px;top:93px;font-size:22.57px;letter-spacing:0.485px;color:#000;">Northern Lights Tech</div>
<div class="t" style="left:627.65px;top:93px;font-size:22.57px;letter-spacing:0.395px;color:#000;">Professional services revenue</div>
<div class="t" style="left:1366.43px;top:93px;font-size:22.57px;letter-spacing:0.411px;color:#000;">Quality Assurance Testing - …</div>
<div class="t" style="left:1784.90px;top:93px;font-size:22.57px;letter-spacing:0.751px;color:#000;">$9,861.10</div>
<div class="t" style="left:30.70px;top:123px;font-size:22.57px;letter-spacing:0.831px;color:#000;">5</div>
<div class="t" style="left:78.46px;top:123px;font-size:22.57px;letter-spacing:0.691px;color:#000;">2025-12-27</div>
<div class="t" style="left:207.02px;top:123px;font-size:22.57px;letter-spacing:0.577px;color:#27ae60;">Income</div>
<div class="t" style="left:305.40px;top:123px;font-size:22.57px;letter-spacing:0.476px;color:#000;">Widgets &amp; Gadgets Inc.</div>
<div class="t" style="left:627.65px;top:123px;font-size:22.57px;letter-spacing:0.395px;color:#000;">Professional services revenue</div>
<div class="t" style="left:1365.65px;top:123px;font-size:22.57px;letter-spacing:0.491px;color:#000;">Database Architecture - Schema …</div>
<div class="t" style="left:1784.90px;top:123px;font-size:22.57px;letter-spacing:0.751px;color:#000;">$5,256.70</div>
<div class="t" style="left:30.45px;top:153px;font-size:22.57px;letter-spacing:0.831px;color:#000;">6</div>
<div class="t" style="left:78.46px;top:153px;font-size:22.57px;letter-spacing:0.691px;color:#000;">2025-12-26</div>
<div class="t" style="left:207.25px;top:153px;font-size:22.57px;letter-spacing:0.217px;color:#e74c3c;">Expense</div>
<div class="t" style="left:305.46px;top:153px;font-size:22.57px;letter-spacing:0.139px;color:#000;">Allied Properties REIT</div>
<div class="t" style="left:627.65px;top:153px;font-size:22.57px;letter-spacing:0.139px;color:#000;">Rent</div>
<div class="t" style="left:1366.43px;top:153px;font-size:22.57px;letter-spacing:0.499px;color:#000;">Office space rent - 1 month (CAD)</div>
<div class="t" style="left:1805.02px;top:153px;font-size:22.57px;letter-spacing:0.784px;color:#000;">$205.80</div>
<div class="t" style="left:30.44px;top:183px;font-size:22.57px;letter-spacing:0.831px;color:#000;">7</div>
<div class="t" style="left:78.46px;top:183px;font-size:22.57px;letter-spacing:0.691px;color:#000;">2025-12-26</div>
<div class="t" style="left:207.25px;top:183px;font-size:22.57px;letter-spacing:0.217px;color:#e74c3c;">Expense</div>
<div class="t" style="left:304.35px;top:183px;font-size:22.57px;letter-spacing:0.366px;color:#000;">Commercial Cleaning Co.</div>
<div class="t" style="left:627.65px;top:183px;font-size:22.57px;letter-spacing:0.527px;color:#000;">Repairs and maintenance</div>
<div class="t" style="left:1366.43px;top:183px;font-size:22.57px;letter-spacing:0.562px;color:#000;">Office cleaning service - 6 month…</div>
<div class="t" style="left:1818.65px;top:183px;font-size:22.57px;letter-spacing:0.773px;color:#000;">$60.12</div>
<div class="t" style="left:30.62px;top:213px;font-size:22.57px;letter-spacing:0.831px;color:#000;">8</div>
<div class="t" style="left:78.46px;top:213px;font-size:22.57px;letter-spacing:0.691px;color:#000;">2025-12-24</div>
<div class="t" style="left:207.02px;top:213px;font-size:22.57px;letter-spacing:0.577px;color:#27ae60;">Income</div>
<div class="t" style="left:303.65px;top:213px;font-size:22.57px;letter-spacing:0.381px;color:#000;">Beaver Engineering Co.</div>
<div class="t" style="left:627.65px;top:213px;font-size:22.57px;letter-spacing:0.395px;color:#000;">Professional services revenue</div>
<div class="t" style="left:1366.99px;top:213px;font-size:22.57px;letter-spacing:0.369px;color:#000;">Training &amp; Onboarding - Session 3</div>
<div class="t" style="left:1785.01px;top:213px;font-size:22.57px;letter-spacing:0.751px;color:#000;">$7,820.36</div>
<div class="t" style="left:30.54px;top:243px;font-size:22.57px;letter-spacing:0.831px;color:#000;">9</div>
<div class="t" style="left:78.46px;top:243px;font-size:22.57px;letter-spacing:0.691px;color:#000;">2025-12-23</div>
<div class="t" style="left:207.02px;top:243px;font-size:22.57px;letter-spacing:0.577px;color:#27ae60;">Income</div>
<div class="t" style="left:305.40px;top:243px;font-size:22.57px;letter-spacing:0.476px;color:#000;">Widgets &amp; Gadgets Inc.</div>
<div class="t" style="left:627.65px;top:243px;font-size:22.57px;letter-spacing:0.395px;color:#000;">Professional services revenue</div>
<div class="t" style="left:1365.65px;top:243px;font-size:22.57px;letter-spacing:0.438px;color:#000;">Performance Optimization - Cycl…</div>
<div class="t" style="left:1784.68px;top:243px;font-size:22.57px;letter-spacing:0.751px;color:#000;">$5,717.74</div>
<div class="t" style="left:29.88px;top:273px;font-size:22.57px;letter-spacing:0.838px;color:#000;">10</div>
<div class="t" style="left:78.46px;top:273px;font-size:22.57px;letter-spacing:0.691px;color:#000;">2025-12-23</div>
<div class="t" style="left:207.25px;top:273px;font-size:22.57px;letter-spacing:0.217px;color:#e74c3c;">Expense</div>
<div class="t" style="left:303.65px;top:273px;font-size:22.57px;letter-spacing:0.564px;color:#000;">Earls Kitchen + Bar</div>
<div class="t" style="left:627.65px;top:273px;font-size:22.57px;letter-spacing:0.722px;color:#000;">Meals and entertainment (50% deductible)</div>
<div class="t" style="left:1366.99px;top:273px;font-size:22.57px;letter-spacing:0.468px;color:#000;">Team lunch meeting (CAD)</div>
<div class="t" style="left:1804.80px;top:273px;font-size:22.57px;letter-spacing:0.784px;color:#000;">$308.74</div>
<div class="t" style="left:29.88px;top:303px;font-size:22.57px;letter-spacing:1.682px;color:#000;">11</div>
<div class="t" style="left:78.46px;top:303px;font-size:22.57px;letter-spacing:0.691px;color:#000;">2025-12-23</div>
<div class="t" style="left:207.02px;top:303px;font-size:22.57px;letter-spacing:0.577px;color:#27ae60;">Income</div>
<div class="t" style="left:303.65px;top:303px;font-size:22.57px;letter-spacing:0.427px;color:#000;">MegaCorp Industries</div>
<div class="t" style="left:627.65px;top:303px;font-size:22.57px;letter-spacing:0.395px;color:#000;">Professional services revenue</div>
<div class="t" style="left:1365.65px;top:303px;font-size:22.57px;letter-spacing:0.623px;color:#000;">Prototype Development - Iteratio…</div>
<div class="t" style="left:1784.90px;top:303px;font-size:22.57px;letter-spacing:0.751px;color:#000;">$9,063.20</div>
<div class="t" style="left:29.88px;top:333px;font-size:22.57px;letter-spacing:0.838px;color:#000;">12</div>
<div class="t" style="left:78.46px;top:333px;font-size:22.57px;letter-spacing:0.691px;color:#000;">2025-12-23</div>
<div class="t" style="left:207.02px;top:333px;font-size:22.57px;letter-spacing:0.577px;color:#27ae60;">Income</div>
<div class="t" style="left:305.40px;top:333px;font-size:22.57px;letter-spacing:0.476px;color:#000;">Widgets &amp; Gadgets Inc.</div>
<div class="t" style="left:627.65px;top:333px;font-size:22.57px;letter-spacing:0.395px;color:#000;">Professional services revenue</div>
<div class="t" style="left:1365.65px;top:333px;font-size:22.57px;letter-spacing:0.386px;color:#000;">Product Design Consultation - …</div>
<div class="t" style="left:1785.01px;top:333px;font-size:22.57px;letter-spacing:0.751px;color:#000;">$7,991.23</div>
<div class="t" style="left:29.88px;top:363px;font-size:22.57px;letter-spacing:0.838px;color:#000;">13</div>
<div class="t" style="left:78.46px;top:363px;font-size:22.57px;letter-spacing:0.691px;color:#000;">2025-12-22</div>
<div class="t" style="left:207.25px;top:363px;font-size:22.57px;letter-spacing:0.217px;color:#e74c3c;">Expense</div>
<div class="t" style="left:303.65px;top:363px;font-size:22.57px;letter-spacing:0.584px;color:#000;">Home Depot</div>
<div class="t" style="left:627.65px;top:363px;font-size:22.57px;letter-spacing:0.527px;color:#000;">Repairs and maintenance</div>
<div class="t" style="left:1365.65px;top:363px;font-size:22.57px;letter-spacing:0.544px;color:#000;">Home office repair materials (CAD)</div>
<div class="t" style="left:1805.27px;top:363px;font-size:22.57px;letter-spacing:0.784px;color:#000;">$169.57</div>
<div class="t" style="left:29.88px;top:393px;font-size:22.57px;letter-spacing:0.838px;color:#000;">14</div>
<div class="t" style="left:78.46px;top:393px;font-size:22.57px;letter-spacing:0.691px;color:#000;">2025-12-21</div>
<div class="t" style="left:207.25px;top:393px;font-size:22.57px;letter-spacing:0.217px;color:#e74c3c;">Expense</div>
<div class="t" style="left:304.99px;top:393px;font-size:22.57px;letter-spacing:-0.050px;color:#000;">Toptal LLC</div>
<div class="t" style="left:627.65px;top:393px;font-size:22.57px;letter-spacing:0.443px;color:#000;">Legal and professional fees</div>
<div class="t" style="left:1366.35px;top:393px;font-size:22.57px;letter-spacing:0.605px;color:#000;">Contract developer - 2 hours</div>
<div class="t" style="left:1785.15px;top:393px;font-size:22.57px;letter-spacing:0.751px;color:#000;">$1,866.57</div>
<div class="t" style="left:29.88px;top:423px;font-size:22.57px;letter-spacing:0.838px;color:#000;">15</div>
<div class="t" style="left:78.46px;top:423px;font-size:22.57px;letter-spacing:0.691px;color:#000;">2025-12-21</div>
<div class="t" style="left:207.25px;top:423px;font-size:22.57px;letter-spacing:0.217px;color:#e74c3c;">Expense</div>
<div class="t" style="left:303.65px;top:423px;font-size:22.57px;letter-spacing:0.479px;color:#000;">Home Hardware</div>
<div class="t" style="left:628.48px;top:423px;font-size:22.57px;letter-spacing:0.310px;color:#000;">Supplies</div>
<div class="t" style="left:1365.65px;top:423px;font-size:22.57px;letter-spacing:0.587px;color:#000;">Hardware supplies - multiple ite…</div>
<div class="t" style="left:1805.12px;top:423px;font-size:22.57px;letter-spacing:0.784px;color:#000;">$615.38</div>
<div class="t" style="left:29.88px;top:453px;font-size:22.57px;letter-spacing:0.838px;color:#000;">16</div>
<div class="t" style="left:78.46px;top:453px;font-size:22.57px;letter-spacing:0.691px;color:#000;">2025-12-21</div>
<div class="t" style="left:207.25px;top:453px;font-size:22.57px;letter-spacing:0.217px;color:#e74c3c;">Expense</div>
<div class="t" style="left:305.46px;top:453px;font-size:22.57px;letter-spacing:0.291px;color:#000;">Amazon Canada</div>
<div class="t" style="left:628.43px;top:453px;font-size:22.57px;letter-spacing:0.423px;color:#000;">Office expenses</div>
<div class="t" style="left:1366.43px;top:453px;font-size:22.57px;letter-spacing:0.465px;color:#000;">Office supplies order - 11 (CAD)</div>
<div class="t" style="left:1818.51px;top:453px;font-size:22.57px;letter-spacing:0.773px;color:#000;">$22.76</div>
<div class="t" style="left:29.88px;top:483px;font-size:22.57px;letter-spacing:0.838px;color:#000;">17</div>
<div class="t" style="left:78.46px;top:483px;font-size:22.57px;letter-spacing:0.691px;color:#000;">2025-12-20</div>
<div class="t" style="left:207.25px;top:483px;font-size:22.57px;letter-spacing:0.217px;color:#e74c3c;">Expense</div>
<div class="t" style="left:303.65px;top:483px;font-size:22.57px;letter-spacing:0.278px;color:#000;">Bureau en Gros</div>
<div class="t" style="left:628.43px;top:483px;font-size:22.57px;letter-spacing:0.423px;color:#000;">Office expenses</div>
<div class="t" style="left:1366.43px;top:483px;font-size:22.57px;letter-spacing:0.524px;color:#000;">Office supplies - monitor stands, …</div>
<div class="t" style="left:1805.13px;top:483px;font-size:22.57px;letter-spacing:0.784px;color:#000;">$286.43</div>
<div class="t" style="left:29.88px;top:513px;font-size:22.57px;letter-spacing:0.838px;color:#000;">18</div>
<div class="t" style="left:78.46px;top:513px;font-size:22.57px;letter-spacing:0.691px;color:#000;">2025-12-19</div>
<div class="t" style="left:207.25px;top:513px;font-size:22.57px;letter-spacing:0.217px;color:#e74c3c;">Expense</div>
<div class="t" style="left:304.99px;top:513px;font-size:22.57px;letter-spacing:0.222px;color:#000;">The Keg Steakhouse</div>
<div class="t" style="left:627.65px;top:513px;font-size:22.57px;letter-spacing:0.722px;color:#000;">Meals and entertainment (50% deductible)</div>
<div class="t" style="left:1366.35px;top:513px;font-size:22.57px;letter-spacing:0.658px;color:#000;">Client dinner meeting - 11 projec…</div>
<div class="t" style="left:1818.18px;top:513px;font-size:22.57px;letter-spacing:0.773px;color:#000;">$95.44</div>
<div class="t" style="left:29.88px;top:543px;font-size:22.57px;letter-spacing:0.838px;color:#000;">19</div>
<div class="t" style="left:78.46px;top:543px;font-size:22.57px;letter-spacing:0.691px;color:#000;">2025-12-18</div>
<div class="t" style="left:207.25px;top:543px;font-size:22.57px;letter-spacing:0.217px;color:#e74c3c;">Expense</div>
<div class="t" style="left:304.35px;top:543px;font-size:22.57px;letter-spacing:0.264px;color:#000;">Costco Business Centre</div>
<div class="t" style="left:628.43px;top:543px;font-size:22.57px;letter-spacing:0.423px;color:#000;">Office expenses</div>
<div class="t" style="left:1365.65px;top:543px;font-size:22.57px;letter-spacing:0.355px;color:#000;">Bulk supplies purchase (CAD)</div>
<div class="t" style="left:1805.27px;top:543px;font-size:22.57px;letter-spacing:0.784px;color:#000;">$185.52</div>
<div class="t" style="left:30.46px;top:573px;font-size:22.57px;letter-spacing:0.838px;color:#000;">20</div>
<div class="t" style="left:78.46px;top:573px;font-size:22.57px;letter-spacing:0.691px;color:#000;">2025-12-18</div>
<div class="t" style="left:207.25px;top:573px;font-size:22.57px;letter-spacing:0.217px;color:#e74c3c;">Expense</div>
<div class="t" style="left:303.65px;top:573px;font-size:22.57px;letter-spacing:0.257px;color:#000;">Enbridge Gas</div>
<div class="t" style="left:627.76px;top:573px;font-size:22.57px;letter-spacing:0.722px;color:#000;">Utilities</div>
<div class="t" style="left:1365.65px;top:573px;font-size:22.57px;letter-spacing:0.578px;color:#000;">Natural gas - home office heatin…</div>
<div class="t" style="left:1805.27px;top:573px;font-size:22.57px;letter-spacing:0.784px;color:#000;">$130.32</div>
<div class="t" style="left:30.46px;top:603px;font-size:22.57px;letter-spacing:0.838px;color:#000;">21</div>
<div class="t" style="left:78.46px;top:603px;font-size:22.57px;letter-spacing:0.691px;color:#000;">2025-12-15</div>
<div class="t" style="left:207.02px;top:603px;font-size:22.57px;letter-spacing:0.577px;color:#27ae60;">Income</div>
<div class="t" style="left:303.65px;top:603px;font-size:22.57px;letter-spacing:0.470px;color:#000;">Maple Leaf Innovations</div>
<div class="t" style="left:627.65px;top:603px;font-size:22.57px;letter-spacing:0.395px;color:#000;">Professional services revenue</div>
<div class="t" style="left:1366.35px;top:603px;font-size:22.57px;letter-spacing:0.365px;color:#000;">Cloud Migration Services - Stage …</div>
<div class="t" style="left:1785.01px;top:603px;font-size:22.57px;letter-spacing:0.751px;color:#000;">$6,477.16</div>
<div class="t" style="left:30.46px;top:633px;font-size:22.57px;letter-spacing:0.838px;color:#000;">22</div>
<div class="t" style="left:78.46px;top:633px;font-size:22.57px;letter-spacing:0.691px;color:#000;">2025-12-13</div>
<div class="t" style="left:207.25px;top:633px;font-size:22.57px;letter-spacing:0.217px;color:#e74c3c;">Expense</div>
<div class="t" style="left:305.40px;top:633px;font-size:22.57px;letter-spacing:0.509px;color:#000;">Vanguard</div>
<div class="t" style="left:628.43px;top:633px;font-size:22.57px;letter-spacing:0.482px;color:#000;">Other expenses</div>
<div class="t" style="left:1366.48px;top:633px;font-size:22.57px;letter-spacing:0.291px;color:#000;">SEP-IRA contribution - 3 year</div>
<div class="t" style="left:1785.15px;top:633px;font-size:22.57px;letter-spacing:0.751px;color:#000;">$2,949.97</div>
<div class="t" style="left:30.46px;top:663px;font-size:22.57px;letter-spacing:0.838px;color:#000;">23</div>
<div class="t" style="left:78.46px;top:663px;font-size:22.57px;letter-spacing:0.858px;color:#000;">2025-12-11</div>
<div class="t" style="left:207.25px;top:663px;font-size:22.57px;letter-spacing:0.217px;color:#e74c3c;">Expense</div>
<div class="t" style="left:303.65px;top:663px;font-size:22.57px;letter-spacing:0.455px;color:#000;">Marwood Office Solutions</div>
<div class="t" style="left:628.43px;top:663px;font-size:22.57px;letter-spacing:0.423px;color:#000;">Office expenses</div>
<div class="t" style="left:1366.43px;top:663px;font-size:22.57px;letter-spacing:0.565px;color:#000;">Office ergonomic equipment (CAD)</div>
<div class="t" style="left:1805.13px;top:663px;font-size:22.57px;letter-spacing:0.784px;color:#000;">$540.76</div>
</div>
<div class="b" style="left:1896px;top:776px;width:14px;height:696px;background:#e4e4e4;border-left:1px solid #b8b8b8"></div>
<div class="b" style="left:1897px;top:776px;width:13px;height:14px;background:#fafafa;border-bottom:1px solid #b8b8b8;box-shadow:inset 0 0 0 1px #fff"></div>
<div class="b" style="left:1897px;top:790px;width:13px;height:40px;background:linear-gradient(90deg,#fdfdfd,#f1f1f1);border-bottom:1px solid #c6c6c6"></div>
<div class="b" style="left:1897px;top:1458px;width:13px;height:14px;background:#fafafa;border-top:1px solid #b8b8b8"></div>
<svg class="b" style="left:1896px;top:776px" width="16" height="700" viewBox="1896 776 16 700"><path d="M1899.4 785L1906.6 785L1903 781Z" fill="#555"/><path d="M1899.4 1463L1906.6 1463L1903 1467Z" fill="#555"/></svg>
<div class="b" style="left:1539px;top:1495px;width:146px;height:33px;background:linear-gradient(#e4e8ea,#c6cdd0);border:1px solid #9ba4a7;border-radius:3px"></div>
<div class="t" style="left:1545.15px;top:1501px;font-size:22.57px;letter-spacing:0.146px;color:#7f8c8d;">Refresh Now</div>
<div class="b" style="left:1691px;top:1495px;width:232px;height:33px;background:#e56d62;border:1px solid #a9352b;border-radius:3px;box-shadow:inset 0 0 0 1px #ec8478"></div>
<div class="t" style="left:1697.95px;top:1501px;font-size:22.57px;letter-spacing:1.174px;color:#fff;font-weight:bold;-webkit-text-stroke:0.4px #fff;">Stop Auto-Refresh</div>
<svg class="b" style="left:1918px;top:1552px" width="20" height="20" viewBox="1918 1552 20 20"><rect x="1931.9" y="1556.9" width="1.3" height="1.3" fill="#9a9a9a"/><rect x="1928.9" y="1559.9" width="1.3" height="1.3" fill="#9a9a9a"/><rect x="1931.9" y="1559.9" width="1.3" height="1.3" fill="#9a9a9a"/><rect x="1925.9" y="1562.9" width="1.3" height="1.3" fill="#9a9a9a"/><rect x="1928.9" y="1562.9" width="1.3" height="1.3" fill="#9a9a9a"/><rect x="1931.9" y="1562.9" width="1.3" height="1.3" fill="#9a9a9a"/><rect x="1922.9" y="1565.9" width="1.3" height="1.3" fill="#9a9a9a"/><rect x="1925.9" y="1565.9" width="1.3" height="1.3" fill="#9a9a9a"/><rect x="1928.9" y="1565.9" width="1.3" height="1.3" fill="#9a9a9a"/><rect x="1931.9" y="1565.9" width="1.3" height="1.3" fill="#9a9a9a"/><path d="M1938 1569Q1938 1572 1935 1572L1938 1572Z" fill="#000"/></svg>
<svg class="b" style="left:1926px;top:0px" width="12" height="12" viewBox="1926 0 12 12"><path d="M1935 0Q1938 0 1938 3L1938 0Z" fill="#000"/></svg>
<svg class="b" style="left:0px;top:1560px" width="12" height="12" viewBox="0 1560 12 12"><path d="M0 1569Q0 1572 3 1572L0 1572Z" fill="#000"/></svg>
</body></html>
